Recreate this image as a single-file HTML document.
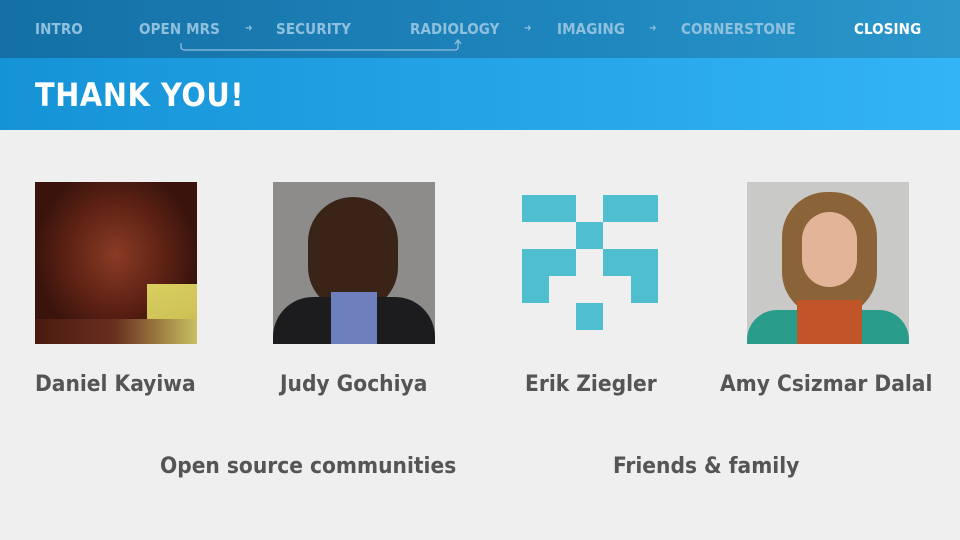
<!DOCTYPE html>
<html><head><style>
body{margin:0;width:960px;height:540px;background:#efefef;font-family:"DejaVu Sans Condensed","Liberation Sans",sans-serif;font-weight:bold;position:relative;overflow:hidden}
.nav{position:absolute;left:0;top:0;width:960px;height:58px;background:linear-gradient(90deg,#1470a5,#1f86bd 60%,#2b97cb)}
.nav span{position:absolute;top:20px;font-size:15px;color:#8fc0dd;letter-spacing:0.1px}
.ban{position:absolute;left:0;top:58px;width:960px;height:72px;background:linear-gradient(90deg,#1593d6,#33b4f6)}
.ban div{position:absolute;left:35px;top:18px;font-size:32px;color:#fff;letter-spacing:0.6px}
.ph{position:absolute;top:182px;width:162px;height:162px}
.nm{position:absolute;top:371px;font-size:22.5px;color:#555;white-space:nowrap;letter-spacing:0}
.b{position:absolute;background:#4fbfcf}
</style></head><body>
<div class="nav">
<span style="left:35px">INTRO</span>
<span style="left:139px">OPEN MRS</span>
<span style="left:245px;font-size:10px;top:23px">➜</span>
<span style="left:276px">SECURITY</span>
<span style="left:410px">RADIOLOGY</span>
<span style="left:524px;font-size:10px;top:23px">➜</span>
<span style="left:557px">IMAGING</span>
<span style="left:649px;font-size:10px;top:23px">➜</span>
<span style="left:681px">CORNERSTONE</span>
<span style="left:854px;color:#fff">CLOSING</span>
<svg style="position:absolute;left:178px;top:38px" width="290" height="16"><path d="M3 5 V9 Q3 12 7 12 H277 Q280 12 280 9 V3 M277 6 L280 2 L283 6" fill="none" stroke="#8fc0dd" stroke-width="1.3"/></svg>
</div>
<div class="ban"><div>THANK YOU!</div></div>
<div class="ph" style="left:35px;background:radial-gradient(ellipse at 50% 45%,#8a3b25 0%,#5a2013 45%,#3a140c 70%),#b3a060"><div style="position:absolute;right:0;bottom:0;width:50px;height:60px;background:linear-gradient(160deg,#d8d060,#c8b850)"></div><div style="position:absolute;left:0;bottom:0;width:162px;height:25px;background:linear-gradient(90deg,#4a1a10,#6a3020,#c8c060)"></div></div>
<div class="ph" style="left:273px;background:#8d8c8a"><div style="position:absolute;left:35px;top:15px;width:90px;height:115px;border-radius:45px;background:#3a2418"></div><div style="position:absolute;left:0;top:115px;width:162px;height:47px;background:#1c1c1e;border-radius:40px 40px 0 0"></div><div style="position:absolute;left:58px;top:110px;width:46px;height:52px;background:#6d7fbd"></div></div>
<div class="b" style="left:522px;top:195px;width:54px;height:27px"></div>
<div class="b" style="left:603px;top:195px;width:55px;height:27px"></div>
<div class="b" style="left:576px;top:222px;width:27px;height:27px"></div>
<div class="b" style="left:522px;top:249px;width:54px;height:27px"></div>
<div class="b" style="left:522px;top:276px;width:27px;height:27px"></div>
<div class="b" style="left:603px;top:249px;width:55px;height:27px"></div>
<div class="b" style="left:631px;top:276px;width:27px;height:27px"></div>
<div class="b" style="left:576px;top:303px;width:27px;height:27px"></div>
<div class="ph" style="left:747px;background:#c9c9c7"><div style="position:absolute;left:35px;top:10px;width:95px;height:125px;border-radius:45px;background:#8a6438"></div><div style="position:absolute;left:55px;top:30px;width:55px;height:75px;border-radius:28px;background:#e4b498"></div><div style="position:absolute;left:0;top:128px;width:162px;height:34px;background:#2a9c8c;border-radius:30px 30px 0 0"></div><div style="position:absolute;left:50px;top:118px;width:65px;height:44px;background:#c0552a"></div></div>
<div class="nm" style="left:35px">Daniel Kayiwa</div>
<div class="nm" style="left:280px">Judy Gochiya</div>
<div class="nm" style="left:525px">Erik Ziegler</div>
<div class="nm" style="left:720px">Amy Csizmar Dalal</div>
<div class="nm" style="left:160px;top:453px">Open source communities</div>
<div class="nm" style="left:613px;top:453px">Friends &amp; family</div>
</body></html>
